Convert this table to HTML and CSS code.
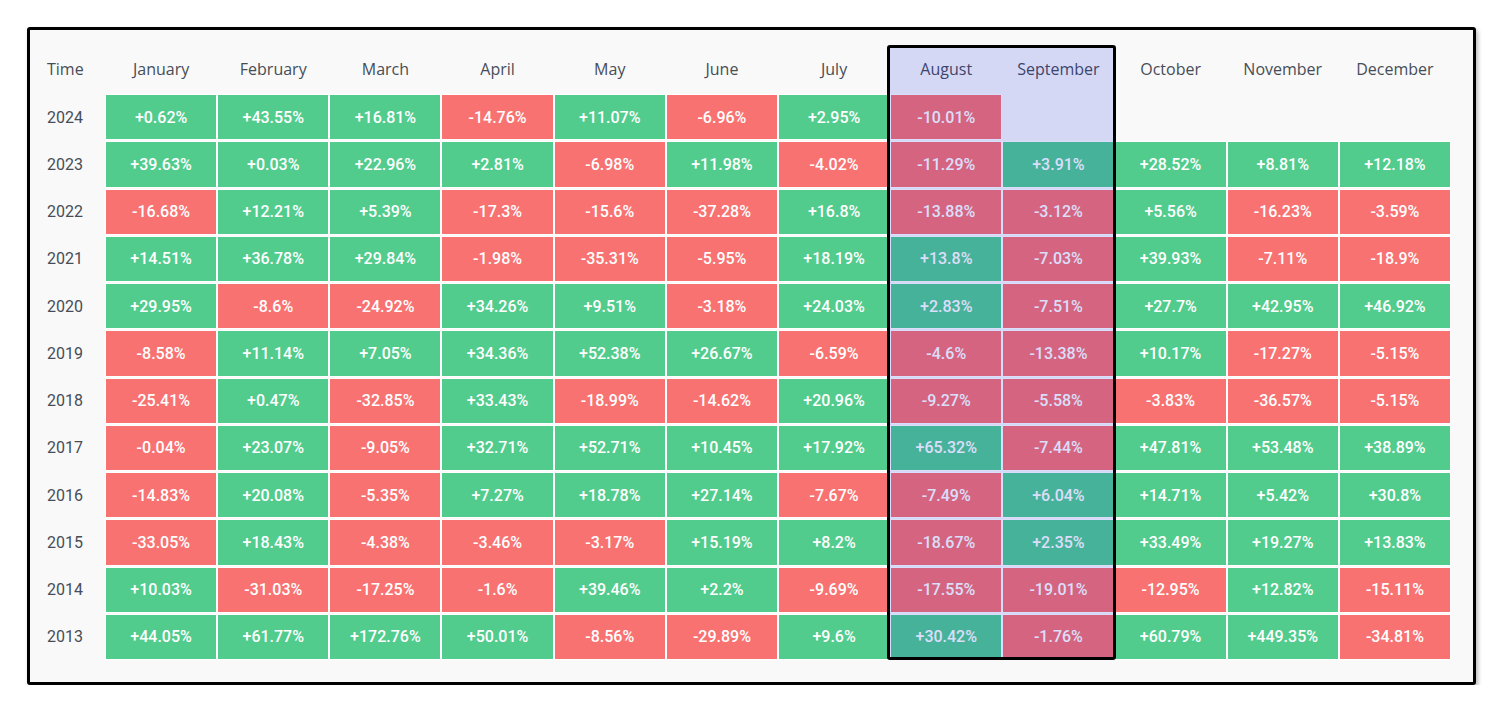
FILE: index.html
```html
<!DOCTYPE html>
<html>
<head>
<meta charset="utf-8">
<link rel="stylesheet" href="styles.css">
</head>
<body>
<div class="frame">
  <div class="grid">
    <div class="th first">Time</div>
    <div class="th">January</div><div class="th">February</div><div class="th">March</div><div class="th">April</div><div class="th">May</div><div class="th">June</div><div class="th">July</div><div class="th">August</div><div class="th">September</div><div class="th">October</div><div class="th">November</div><div class="th">December</div>

    <div class="yr">2024</div>
    <div class="c up">+0.62%</div><div class="c up">+43.55%</div><div class="c up">+16.81%</div><div class="c dn">-14.76%</div><div class="c up">+11.07%</div><div class="c dn">-6.96%</div><div class="c up">+2.95%</div><div class="c dn">-10.01%</div><div class="c"></div><div class="c"></div><div class="c"></div><div class="c"></div>

    <div class="yr">2023</div>
    <div class="c up">+39.63%</div><div class="c up">+0.03%</div><div class="c up">+22.96%</div><div class="c up">+2.81%</div><div class="c dn">-6.98%</div><div class="c up">+11.98%</div><div class="c dn">-4.02%</div><div class="c dn">-11.29%</div><div class="c up">+3.91%</div><div class="c up">+28.52%</div><div class="c up">+8.81%</div><div class="c up">+12.18%</div>

    <div class="yr">2022</div>
    <div class="c dn">-16.68%</div><div class="c up">+12.21%</div><div class="c up">+5.39%</div><div class="c dn">-17.3%</div><div class="c dn">-15.6%</div><div class="c dn">-37.28%</div><div class="c up">+16.8%</div><div class="c dn">-13.88%</div><div class="c dn">-3.12%</div><div class="c up">+5.56%</div><div class="c dn">-16.23%</div><div class="c dn">-3.59%</div>

    <div class="yr">2021</div>
    <div class="c up">+14.51%</div><div class="c up">+36.78%</div><div class="c up">+29.84%</div><div class="c dn">-1.98%</div><div class="c dn">-35.31%</div><div class="c dn">-5.95%</div><div class="c up">+18.19%</div><div class="c up">+13.8%</div><div class="c dn">-7.03%</div><div class="c up">+39.93%</div><div class="c dn">-7.11%</div><div class="c dn">-18.9%</div>

    <div class="yr">2020</div>
    <div class="c up">+29.95%</div><div class="c dn">-8.6%</div><div class="c dn">-24.92%</div><div class="c up">+34.26%</div><div class="c up">+9.51%</div><div class="c dn">-3.18%</div><div class="c up">+24.03%</div><div class="c up">+2.83%</div><div class="c dn">-7.51%</div><div class="c up">+27.7%</div><div class="c up">+42.95%</div><div class="c up">+46.92%</div>

    <div class="yr">2019</div>
    <div class="c dn">-8.58%</div><div class="c up">+11.14%</div><div class="c up">+7.05%</div><div class="c up">+34.36%</div><div class="c up">+52.38%</div><div class="c up">+26.67%</div><div class="c dn">-6.59%</div><div class="c dn">-4.6%</div><div class="c dn">-13.38%</div><div class="c up">+10.17%</div><div class="c dn">-17.27%</div><div class="c dn">-5.15%</div>

    <div class="yr">2018</div>
    <div class="c dn">-25.41%</div><div class="c up">+0.47%</div><div class="c dn">-32.85%</div><div class="c up">+33.43%</div><div class="c dn">-18.99%</div><div class="c dn">-14.62%</div><div class="c up">+20.96%</div><div class="c dn">-9.27%</div><div class="c dn">-5.58%</div><div class="c dn">-3.83%</div><div class="c dn">-36.57%</div><div class="c dn">-5.15%</div>

    <div class="yr">2017</div>
    <div class="c dn">-0.04%</div><div class="c up">+23.07%</div><div class="c dn">-9.05%</div><div class="c up">+32.71%</div><div class="c up">+52.71%</div><div class="c up">+10.45%</div><div class="c up">+17.92%</div><div class="c up">+65.32%</div><div class="c dn">-7.44%</div><div class="c up">+47.81%</div><div class="c up">+53.48%</div><div class="c up">+38.89%</div>

    <div class="yr">2016</div>
    <div class="c dn">-14.83%</div><div class="c up">+20.08%</div><div class="c dn">-5.35%</div><div class="c up">+7.27%</div><div class="c up">+18.78%</div><div class="c up">+27.14%</div><div class="c dn">-7.67%</div><div class="c dn">-7.49%</div><div class="c up">+6.04%</div><div class="c up">+14.71%</div><div class="c up">+5.42%</div><div class="c up">+30.8%</div>

    <div class="yr">2015</div>
    <div class="c dn">-33.05%</div><div class="c up">+18.43%</div><div class="c dn">-4.38%</div><div class="c dn">-3.46%</div><div class="c dn">-3.17%</div><div class="c up">+15.19%</div><div class="c up">+8.2%</div><div class="c dn">-18.67%</div><div class="c up">+2.35%</div><div class="c up">+33.49%</div><div class="c up">+19.27%</div><div class="c up">+13.83%</div>

    <div class="yr">2014</div>
    <div class="c up">+10.03%</div><div class="c dn">-31.03%</div><div class="c dn">-17.25%</div><div class="c dn">-1.6%</div><div class="c up">+39.46%</div><div class="c up">+2.2%</div><div class="c dn">-9.69%</div><div class="c dn">-17.55%</div><div class="c dn">-19.01%</div><div class="c dn">-12.95%</div><div class="c up">+12.82%</div><div class="c dn">-15.11%</div>

    <div class="yr">2013</div>
    <div class="c up">+44.05%</div><div class="c up">+61.77%</div><div class="c up">+172.76%</div><div class="c up">+50.01%</div><div class="c dn">-8.56%</div><div class="c dn">-29.89%</div><div class="c up">+9.6%</div><div class="c up">+30.42%</div><div class="c dn">-1.76%</div><div class="c up">+60.79%</div><div class="c up">+449.35%</div><div class="c dn">-34.81%</div>

    <div class="highlight"></div>
  </div>
</div>
</body>
</html>
```

FILE: styles.css
```css
html, body {
  margin: 0;
  padding: 0;
  background: #ffffff;
}

body {
  padding: 27px 0 0 27px;
  font-family: Roboto, "Liberation Sans", sans-serif;
}

.frame {
  box-sizing: border-box;
  width: 1449px;
  height: 658px;
  border: 3px solid #000;
  border-radius: 3px;
  background: #f9f9f9;
  box-shadow: 2px 3px 4px rgba(0, 0, 0, 0.28);
  padding: 15px 0 0 17px;
}

.grid {
  position: relative;
  width: 1403px;
  display: grid;
  grid-template-columns: 57px repeat(12, 1fr);
  grid-template-rows: 47px repeat(12, 44.25px);
  column-gap: 2px;
  row-gap: 3px;
}

.th {
  display: flex;
  align-items: center;
  justify-content: center;
  font-family: "Open Sans", Roboto, sans-serif;
  font-size: 16px;
  color: #474d57;
}

.th.first {
  justify-content: flex-start;
}

.yr {
  display: flex;
  align-items: center;
  font-size: 16px;
  color: #474d57;
}

.c {
  display: flex;
  align-items: center;
  justify-content: center;
  font-size: 16px;
  font-weight: 500;
  color: #ffffff;
}

.up {
  background: #52cc8d;
  box-shadow: 0 0 0 1px #fff;
}

.dn {
  background: #f87272;
  box-shadow: 0 0 0 1px #fff;
}

.highlight {
  position: absolute;
  left: 840px;
  top: 0;
  width: 229px;
  height: 615px;
  box-sizing: border-box;
  border: 3px solid #000;
  border-radius: 3px;
  background: rgba(0, 20, 225, 0.14);
  pointer-events: none;
}
```
